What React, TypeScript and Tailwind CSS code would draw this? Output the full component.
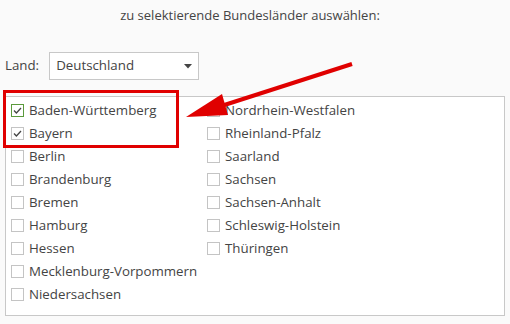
import React from "react"

const left = [
  { label: "Baden-Württemberg", checked: true, focused: true },
  { label: "Bayern", checked: true },
  { label: "Berlin" },
  { label: "Brandenburg" },
  { label: "Bremen" },
  { label: "Hamburg" },
  { label: "Hessen" },
  { label: "Mecklenburg-Vorpommern" },
  { label: "Niedersachsen" },
]

const right = [
  { label: "Nordrhein-Westfalen" },
  { label: "Rheinland-Pfalz" },
  { label: "Saarland" },
  { label: "Sachsen" },
  { label: "Sachsen-Anhalt" },
  { label: "Schleswig-Holstein" },
  { label: "Thüringen" },
]

type Item = { label: string; checked?: boolean; focused?: boolean }

function Row({ item }: { item: Item }) {
  return (
    <div className="flex h-[23px] items-center gap-[5px]">
      <span
        className={`flex h-[13px] w-[13px] shrink-0 items-center justify-center border bg-white ${
          item.focused ? "border-[#5b9a3c]" : "border-[#c4c4c4]"
        }`}
      >
        {item.checked && (
          <svg width="11" height="11" viewBox="0 0 11 11" fill="none">
            <path d="M2 5.5 L4.4 8 L9 3" stroke="#444" strokeWidth="1.3" />
          </svg>
        )}
      </span>
      <span className="whitespace-nowrap">{item.label}</span>
    </div>
  )
}

export default function App() {
  return (
    <div className="relative h-[324px] w-[510px] overflow-hidden bg-[#fafafa] font-['Open_Sans',sans-serif] text-[13.3px] text-[#444]">
      <div className="pr-[10px] pt-[6px] text-center text-[13px] leading-[18px]">
        zu selektierende Bundesländer auswählen:
      </div>

      <div className="mt-[28px] flex items-center gap-[10px] pl-[5px]">
        <span>Land:</span>
        <div className="flex h-[28px] w-[150px] items-center justify-between border border-[#c8c8c8] bg-white pl-[6px] pr-[6px]">
          <span>Deutschland</span>
          <svg width="8" height="5" viewBox="0 0 8 5">
            <path d="M0 0 H8 L4 4.5 Z" fill="#444" />
          </svg>
        </div>
      </div>

      <div className="mx-[5px] mt-[16px] flex h-[220px] border border-[#c8c8c8] bg-white pl-[5px] pt-[2px]">
        <div className="flex w-[196px] flex-col">
          {left.map((it) => (
            <Row key={it.label} item={it} />
          ))}
        </div>
        <div className="flex flex-col">
          {right.map((it) => (
            <Row key={it.label} item={it} />
          ))}
        </div>
      </div>

      <div className="absolute left-[3px] top-[90px] h-[58px] w-[176px] border-[3px] border-[#e00000]" />

      <svg className="absolute left-0 top-0" width="510" height="324" viewBox="0 0 510 324">
        <line x1="352" y1="64" x2="215" y2="108" stroke="#e00000" strokeWidth="4" />
        <path d="M186 117 L222 94 L228 115 Z" fill="#e00000" />
      </svg>
    </div>
  )
}
